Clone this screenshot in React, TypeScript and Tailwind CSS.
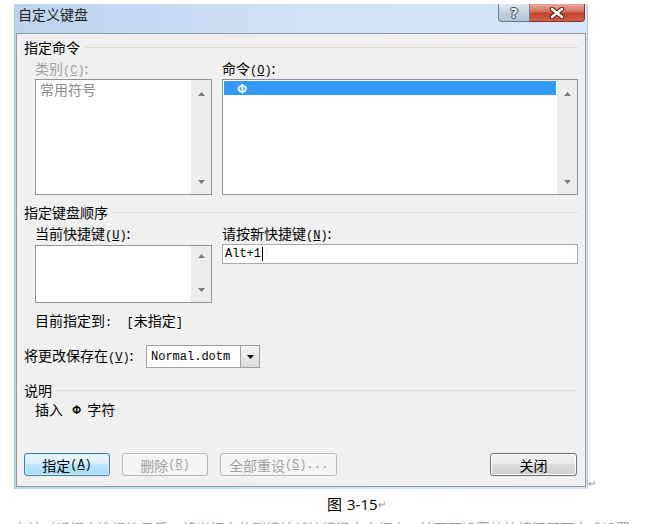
import React from 'react';

const cjk = "font-['Noto_Sans_CJK_SC','Noto_Sans',sans-serif]";
const mono = "font-['Liberation_Mono','Noto_Sans_CJK_SC',monospace]";

// mnemonic such as (C) with the letter underlined
function Key({ k }: { k: string }) {
  return (
    <span className={`${mono} text-[12px]`}>
      (<span className="underline underline-offset-1">{k}</span>)
    </span>
  );
}

function Tri({ up, color = '#7a7a7a' }: { up?: boolean; color?: string }) {
  return (
    <svg width="7" height="4" viewBox="0 0 7 4">
      <path d={up ? 'M0 4L3.5 0L7 4Z' : 'M0 0L7 0L3.5 4Z'} fill={color} />
    </svg>
  );
}

function ScrollBar({ pad }: { pad: string }) {
  return (
    <div className={`flex w-[20px] shrink-0 flex-col items-center justify-between bg-[#ececec] ${pad}`}>
      <Tri up />
      <Tri />
    </div>
  );
}

function SectionHeader({ title }: { title: string }) {
  return (
    <div className="flex h-[16px] items-center">
      <span className="leading-[16px]">{title}</span>
      <div className="ml-[5px] h-px flex-1 bg-[#d5dfe5]" />
    </div>
  );
}

function Button({
  children,
  kind,
  className = '',
}: {
  children: React.ReactNode;
  kind: 'default' | 'disabled' | 'normal';
  className?: string;
}) {
  const styles = {
    default:
      'border-[#3c7fb1] bg-[linear-gradient(#eaf6fd_0%,#d9f0fc_45%,#bee6fd_50%,#a7d9f5_100%)] text-black shadow-[inset_0_0_0_1px_#d8ecf8]',
    disabled: 'border-[#b5b8ba] bg-[#f4f4f4] text-[#a3a3a3]',
    normal:
      'border-[#707070] bg-[linear-gradient(#f2f2f2_0%,#ebebeb_45%,#dddddd_50%,#cfcfcf_100%)] text-black shadow-[inset_0_0_0_1px_#fcfcfc]',
  };
  return (
    <div
      className={`flex h-[23px] items-center justify-center rounded-[3px] border leading-[14px] ${styles[kind]} ${className}`}
    >
      {children}
    </div>
  );
}

export default function App() {
  return (
    <div className={`relative h-[524px] w-[666px] overflow-hidden bg-white text-[14px] text-black ${cjk}`}>
      {/* dialog window */}
      <div className="ml-[14px] mt-[4px] w-[574px] bg-[linear-gradient(90deg,#bcd3ee_0%,#cfe1f5_50%,#d6e7f9_100%)] px-[2px] pb-[2px] shadow-[inset_1px_0_0_#a9c4e6,inset_-1px_0_0_#a9c4e6]">
        {/* title bar */}
        <div className="flex h-[29px] items-start justify-between">
          <div className="pl-[2px] text-[14px] leading-[20px] text-[#1e1e1e]">自定义键盘</div>
          <div className="mr-px flex">
            <div className="flex h-[18px] w-[32px] items-center justify-center rounded-bl-[4px] border border-t-0 border-[#6c7d93] bg-[linear-gradient(#dfe8f2,#c3d1e0_50%,#b2c3d6)]">
              <span className="font-['DejaVu_Sans',sans-serif] text-[14px] font-bold leading-[14px] text-[#f4f6f8] [text-shadow:1px_0_0_#3a4656,-1px_0_0_#3a4656,0_1px_0_#3a4656,0_-1px_0_#3a4656]">
                ?
              </span>
            </div>
            <div className="flex h-[18px] w-[55px] items-center justify-center rounded-br-[4px] border border-l-0 border-t-0 border-[#7f3428] bg-[linear-gradient(#e9a99c,#d47160_45%,#c4422c_55%,#d2604a)]">
              <svg width="16" height="12" viewBox="0 0 16 12">
                <path d="M3 2L13 10M13 2L3 10" stroke="#4a1a12" strokeWidth="4.5" strokeLinecap="round" />
                <path d="M3 2L13 10M13 2L3 10" stroke="#ffffff" strokeWidth="2.6" strokeLinecap="round" />
              </svg>
            </div>
          </div>
        </div>

        {/* body */}
        <div className="h-[454px] border border-[#979797] bg-[#f0f0f0] px-[7px]">
          <div className="mt-[5px]">
            <SectionHeader title="指定命令" />
          </div>

          <div className="mt-[6px] flex gap-[10px] pl-[11px]">
            <div className="flex w-[177px] flex-col gap-[4px]">
              <div className="h-[14px] leading-[14px] text-[#a0a0a0]">
                类别<Key k="C" />:
              </div>
              <div className="flex h-[116px] border border-[#8f9499] bg-white">
                <div className="flex-1 pl-[4px] pt-[1px] leading-[16px] text-[#8a8a8a]">常用符号</div>
                <ScrollBar pad="pt-[12px] pb-[10px]" />
              </div>
            </div>
            <div className="flex flex-1 flex-col gap-[4px]">
              <div className="h-[14px] leading-[14px]">
                命令<Key k="O" />:
              </div>
              <div className="flex h-[116px] border border-[#8f9499] bg-white">
                <div className="flex-1 p-px">
                  <div className="flex h-[14px] items-center bg-[#3399ff] pl-[13px] text-[12px] font-bold leading-[14px] text-white">
                    Φ
                  </div>
                </div>
                <ScrollBar pad="pt-[12px] pb-[10px]" />
              </div>
            </div>
          </div>

          <div className="mt-[9px]">
            <SectionHeader title="指定键盘顺序" />
          </div>

          <div className="mt-[6px] flex gap-[10px] pl-[11px]">
            <div className="flex w-[177px] flex-col">
              <div className="h-[14px] leading-[14px]">
                当前快捷键<Key k="U" />:
              </div>
              <div className="mt-[5px] flex h-[58px] border border-[#8f9499] bg-white">
                <div className="flex-1" />
                <ScrollBar pad="pt-[8px] pb-[10px]" />
              </div>
              <div className="mt-[10px] h-[14px] whitespace-nowrap leading-[14px]">
                目前指定到<span className={`${mono} text-[12px]`}>: &nbsp;[</span>未指定
                <span className={`${mono} text-[12px]`}>]</span>
              </div>
            </div>
            <div className="flex flex-1 flex-col">
              <div className="h-[14px] leading-[14px]">
                请按新快捷键<Key k="N" />:
              </div>
              <div className="mt-[4px] flex h-[20px] items-center border border-[#a6abb0] bg-white pl-[2px]">
                <span className={`${mono} text-[12px] leading-[14px]`}>Alt+1</span>
                <span className="ml-px h-[14px] w-px bg-black" />
              </div>
            </div>
          </div>

          <div className="mt-[18px] flex h-[23px] items-center">
            <div className="w-[122px] whitespace-nowrap leading-[14px]">
              将更改保存在<Key k="V" />:
            </div>
            <div className="flex h-[23px] w-[114px] items-center border border-[#a0a0a0] bg-white">
              <span className={`${mono} flex-1 pl-[4px] text-[12px] leading-[14px]`}>Normal.dotm</span>
              <div className="flex h-[21px] w-[19px] items-center justify-center border-l border-[#a0a0a0] bg-[linear-gradient(#f2f2f2,#dcdcdc)]">
                <Tri color="#000000" />
              </div>
            </div>
          </div>

          <div className="mt-[14px]">
            <SectionHeader title="说明" />
          </div>

          <div className="mt-[4px] flex h-[14px] items-center pl-[11px] leading-[14px]">
            <span>插入</span>
            <span className="ml-[9px] text-[11px] font-bold">Φ</span>
            <span className="ml-[6px]">字符</span>
          </div>

          <div className="mt-[37px] flex gap-[12px] pr-px">
            <Button kind="default" className="w-[86px]">
              指定<Key k="A" />
            </Button>
            <Button kind="disabled" className="w-[86px]">
              删除<Key k="R" />
            </Button>
            <Button kind="disabled" className="w-[117px]">
              全部重设<Key k="S" />
              <span className={`${mono} text-[12px]`}>...</span>
            </Button>
            <Button kind="normal" className="ml-auto w-[87px]">
              关闭
            </Button>
          </div>
        </div>
      </div>

      {/* paragraph mark at the picture's corner */}
      <span className="absolute left-[588px] top-[478px] text-[10px] leading-[10px] text-[#8c8c8c]">↵</span>

      {/* caption */}
      <div className="mt-[7px] flex h-[16px] items-center pl-[327px] leading-[16px]">
        <span className="text-[15px]">图</span>
        <span className="ml-[5px] font-['Open_Sans',sans-serif] text-[15px]">3-15</span>
        <span className="text-[10px] text-[#8c8c8c]">↵</span>
      </div>

      {/* top of the next text line, cut off by the window */}
      <div className="mt-[8px] whitespace-nowrap pl-[14px] text-[14px] leading-[16px] text-[#9a9a9a]">
        在该对话框中选择符号后，将光标定位到请按新快捷键文本框中，按下要设置的快捷键即可完成设置。
      </div>
    </div>
  );
}
